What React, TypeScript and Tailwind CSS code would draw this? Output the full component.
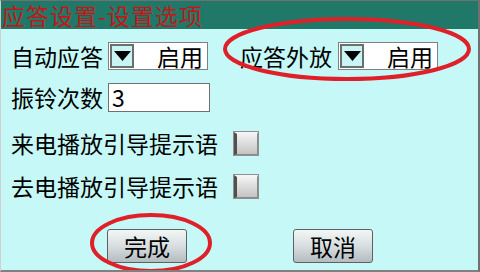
import React from "react";

const font = { fontFamily: '"Noto Sans CJK SC", "Noto Sans", sans-serif' };

function Dropdown({ value }: { value: string }) {
  return (
    <div className="flex h-[28px] w-[100px] items-center border border-[#808080] bg-white pl-[1px]">
      <div className="flex h-[24px] w-[24px] items-center justify-center border-2 border-[#687070] bg-[#c8f4f4]">
        <svg width="17" height="10" viewBox="0 0 17 10">
          <polygon points="0,0 17,0 8.5,10" fill="#000" />
        </svg>
      </div>
      <div className="flex-1 pr-[4px] text-right leading-none">{value}</div>
    </div>
  );
}

function Checkbox() {
  return (
    <div className="h-[23px] w-[24px] border border-[#8a8a8a] border-l-[3px] border-l-[#505050] border-t-[2px] border-t-[#f4f4f4] bg-gradient-to-b from-[#f2f2f2] to-[#c4c4c4] outline outline-1 outline-[#909090]" />
  );
}

function Btn({ label }: { label: string }) {
  return (
    <div className="flex h-[34px] w-[80px] items-center justify-center rounded-[3px] border border-[#606060] bg-gradient-to-b from-[#f2f6f6] via-[#d8dee0] to-[#b4bcc0] leading-none">
      {label}
    </div>
  );
}

export default function App() {
  return (
    <div
      className="relative flex h-[272px] w-[480px] flex-col overflow-hidden border-t border-r-2 border-b-2 border-l border-t-[#707070] border-r-[#707070] border-b-[#808080] border-l-[#d0d0d0] bg-[#c5f8f6] text-[23px] text-black"
      style={font}
    >
      <div className="h-[28px] bg-[#207868] pl-[1px] leading-[28px] tracking-[1px] text-[#c01818]">
        应答设置-设置选项
      </div>

      <div className="mt-[13px] flex h-[28px] items-center pl-[10px]">
        <div className="w-[97px] leading-none">自动应答</div>
        <Dropdown value="启用" />
        <div className="ml-[32px] w-[98px] leading-none">应答外放</div>
        <Dropdown value="启用" />
      </div>

      <div className="mt-[13px] flex h-[29px] items-center pl-[10px]">
        <div className="w-[97px] leading-none">振铃次数</div>
        <div className="flex h-[29px] w-[102px] items-center border border-[#707070] bg-white pl-[3px] leading-none">
          3
        </div>
      </div>

      <div className="mt-[19px] flex h-[24px] items-center pl-[10px]">
        <div className="w-[223px] leading-none">来电播放引导提示语</div>
        <Checkbox />
      </div>

      <div className="mt-[19px] flex h-[24px] items-center pl-[10px]">
        <div className="w-[223px] leading-none">去电播放引导提示语</div>
        <Checkbox />
      </div>

      <div className="mt-[31px] flex gap-[106px] pl-[106px]">
        <Btn label="完成" />
        <Btn label="取消" />
      </div>

      <svg
        className="pointer-events-none absolute left-0 top-0"
        width="480"
        height="272"
        viewBox="0 0 480 272"
      >
        <ellipse cx="346" cy="48" rx="122" ry="30" fill="none" stroke="#e02028" strokeWidth="4" />
        <ellipse cx="150" cy="242" rx="59" ry="28" fill="none" stroke="#e02028" strokeWidth="4" />
      </svg>
    </div>
  );
}
